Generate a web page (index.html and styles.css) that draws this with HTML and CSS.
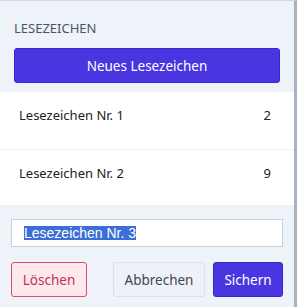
FILE: index.html
```html
<!DOCTYPE html>
<html lang="de">
<head>
<meta charset="utf-8">
<link rel="stylesheet" href="styles.css">
</head>
<body>
<div class="panel">
  <div class="header">
    <div class="label">LESEZEICHEN</div>
    <button class="btn btn-primary btn-block">Neues Lesezeichen</button>
  </div>
  <ul class="list">
    <li class="row"><span class="name">Lesezeichen Nr. 1</span><span class="count">2</span></li>
    <li class="row"><span class="name">Lesezeichen Nr. 2</span><span class="count">9</span></li>
  </ul>
  <div class="footer">
    <div class="input"><span class="sel">Lesezeichen Nr. 3</span></div>
    <div class="actions">
      <button class="btn btn-danger">Löschen</button>
      <div class="right">
        <button class="btn btn-light">Abbrechen</button>
        <button class="btn btn-primary">Sichern</button>
      </div>
    </div>
  </div>
</div>
</body>
</html>
```
FILE: styles.css
```css
* { box-sizing: border-box; }
html, body { margin: 0; padding: 0; }
body {
  font-family: "Noto Sans", "Open Sans", sans-serif;
  background: #eef2f9;
  width: 297px;
  height: 307px;
  overflow: hidden;
}
.panel {
  width: 297px;
  height: 307px;
  background: #eef2f9;
  border-right: 3px solid #a9b2c1;
  border-top: 1px solid #d3d8e0;
  display: flex;
  flex-direction: column;
}
.header {
  padding: 17px 14px 9px 14px;
}
.label {
  font-size: 13px;
  line-height: 20px;
  color: #4b5563;
  margin-bottom: 10px;
}
.btn {
  font-family: inherit;
  font-size: 13.5px;
  height: 35px;
  border-radius: 3px;
  border: 1px solid transparent;
  padding: 0 8px;
  cursor: pointer;
}
.btn-block { width: 100%; display: block; }
.btn-primary {
  background: #4936e1;
  border-color: #3b28c8;
  color: #fff;
}
.btn-danger {
  background: #fde8ee;
  border-color: #e0486f;
  color: #c2314f;
  width: 76px;
}
.btn-light {
  background: #eef1f8;
  border-color: #dbe0ea;
  color: #3f4652;
  width: 92px;
}
.list {
  list-style: none;
  margin: 0;
  padding: 0;
  background: #fff;
}
.row {
  display: flex;
  justify-content: space-between;
  align-items: flex-start;
  height: 57px;
  padding: 13px 23px 0 19px;
  font-size: 13px;
  line-height: 20px;
  color: #222;
}
.row + .row { border-top: 1px solid #eef1f6; height: 56px; }
.footer {
  padding: 14px 11px 0 11px;
}
.input {
  height: 28px;
  background: #fff;
  border: 1px solid #c9d0dc;
  padding: 0 0 0 12px;
  display: flex;
  align-items: center;
  font-family: "Liberation Sans", Arial, sans-serif;
  font-size: 14px;
}
.sel {
  background: #3b6fd6;
  color: #fff;
  line-height: 14px;
}
.actions {
  display: flex;
  justify-content: space-between;
  margin-top: 15px;
}
.right {
  display: flex;
  gap: 8px;
}
.right .btn-primary { width: 70px; }
```
